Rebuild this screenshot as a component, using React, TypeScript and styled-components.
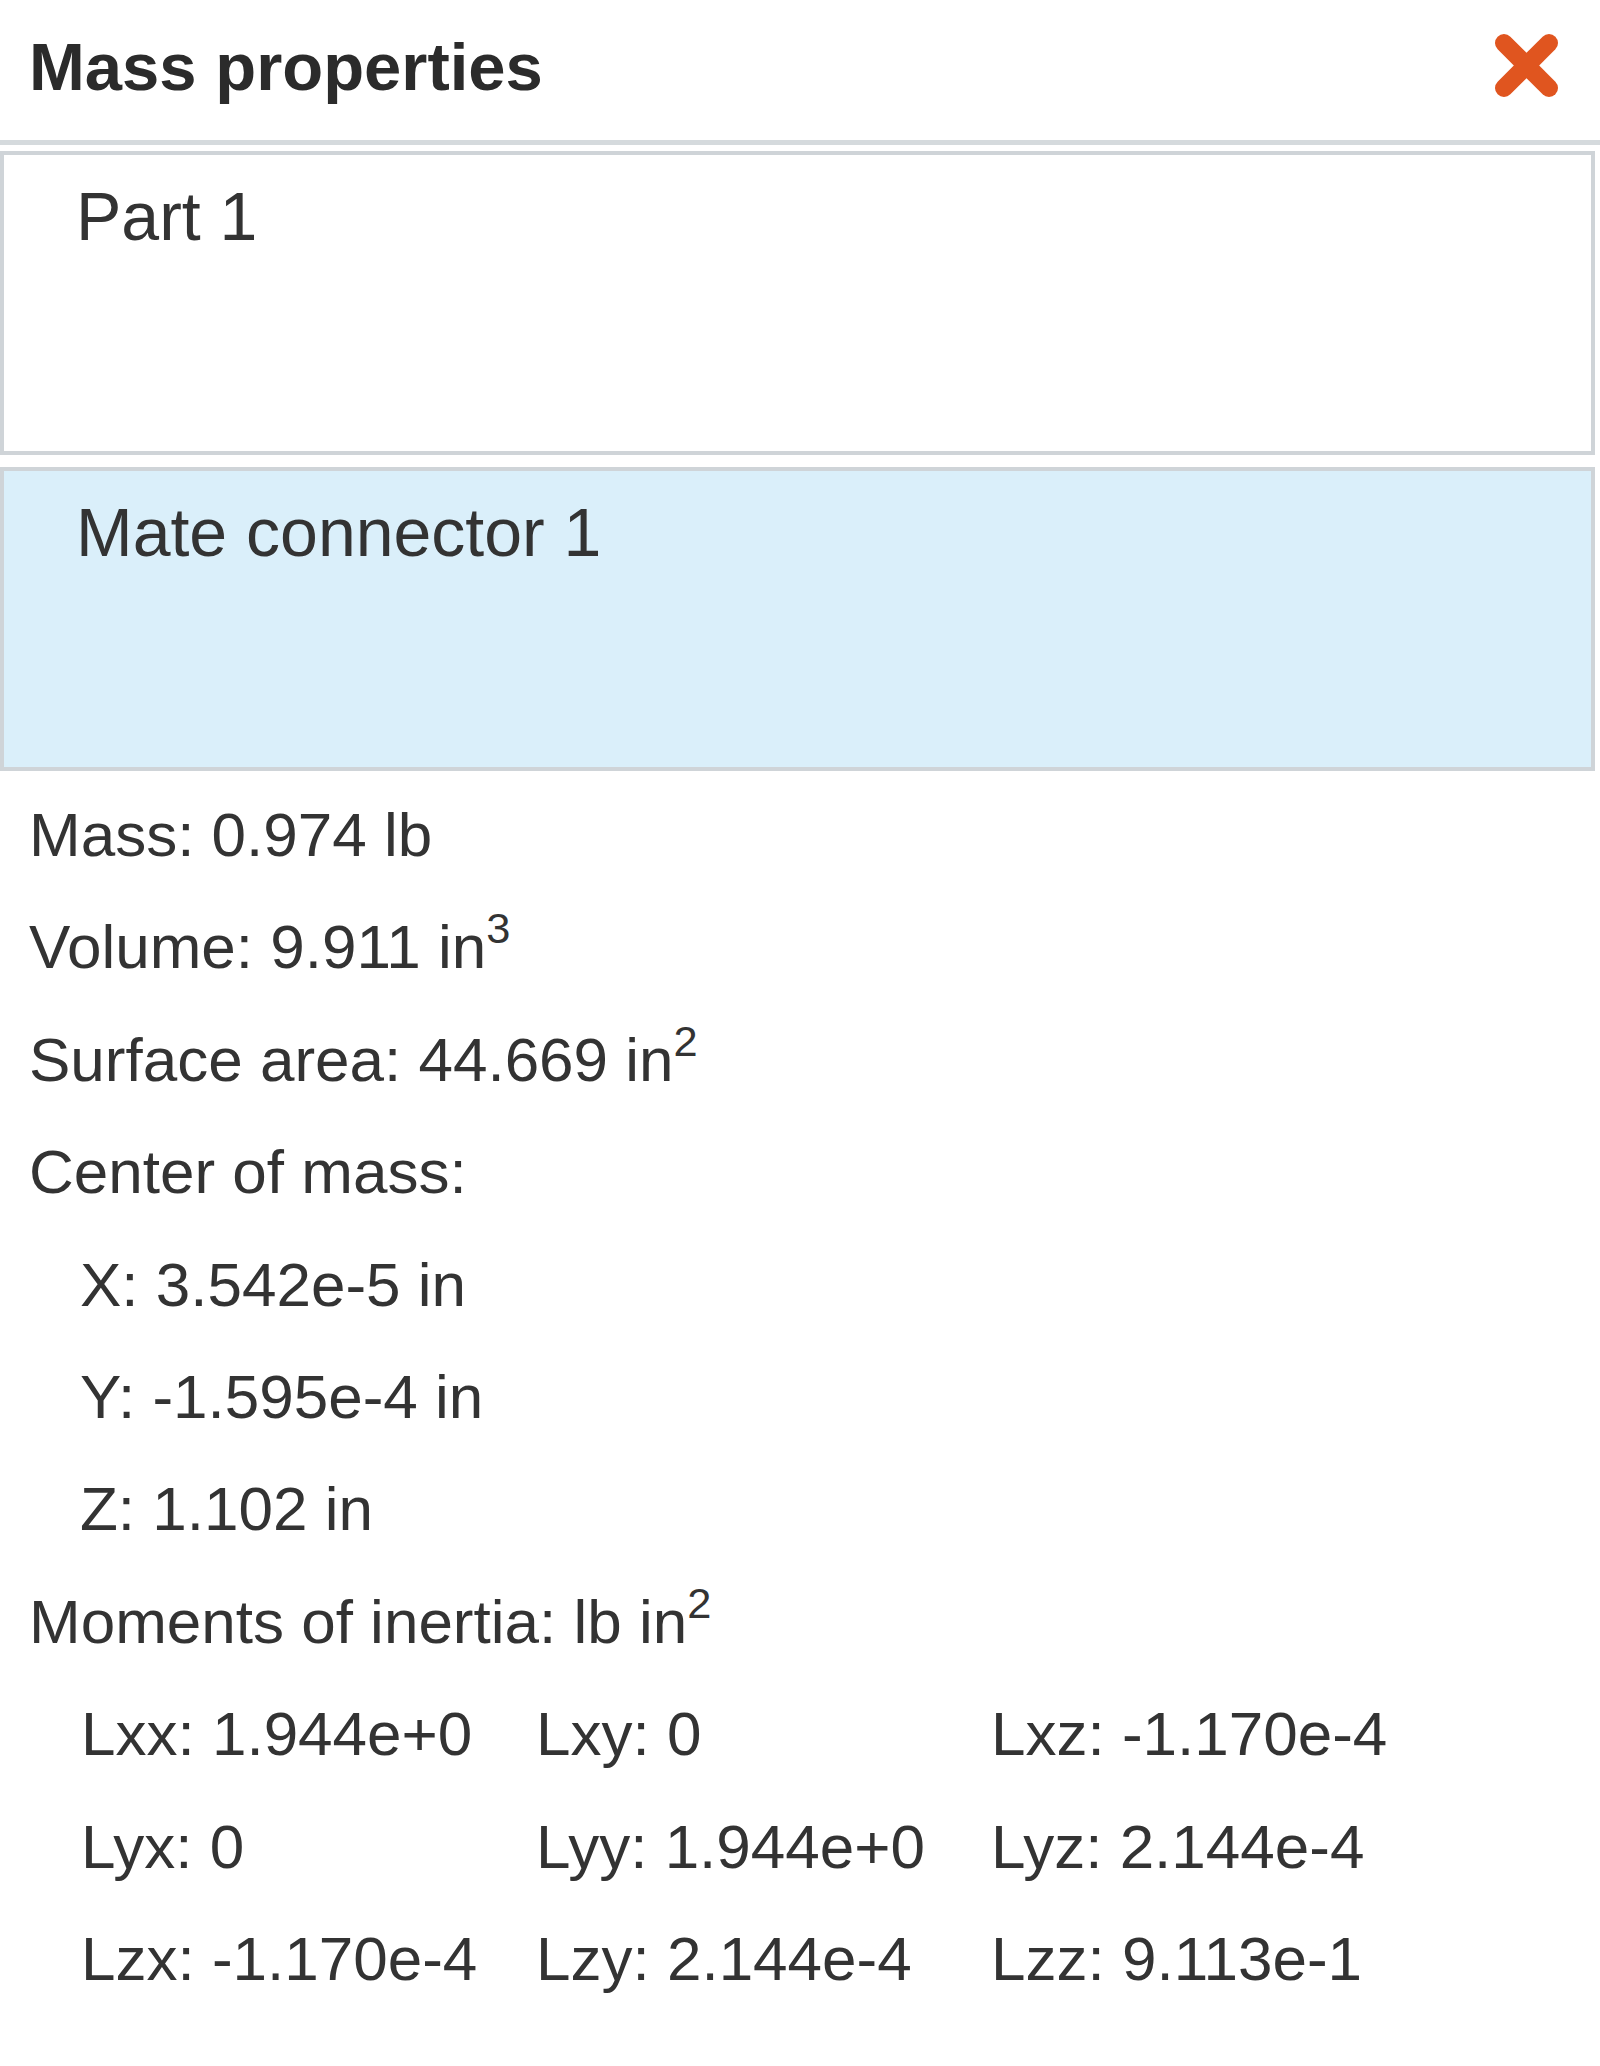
import React from 'react';
import styled, { createGlobalStyle } from 'styled-components';

const Global = createGlobalStyle`
  html, body { margin: 0; padding: 0; background: #ffffff; }
  body { font-family: "Liberation Sans", Arial, sans-serif; color: #333333; }
`;

const Panel = styled.div`
  width: 1600px;
  display: flex;
  flex-direction: column;
`;

const Header = styled.header`
  height: 140px;
  display: flex;
  justify-content: space-between;
  align-items: flex-start;
  padding: 0 40px 0 29px;
  border-bottom: 5px solid #d5dadd;
`;

const Title = styled.h1`
  margin: 33px 0 0;
  font-size: 67px;
  line-height: 67px;
  font-weight: 700;
  color: #2b2b2b;
`;

const CloseButton = styled.button`
  margin-top: 32px;
  width: 67px;
  height: 67px;
  padding: 0;
  border: 0;
  background: none;
  display: block;
  cursor: pointer;
`;

const ItemList = styled.div`
  display: flex;
  flex-direction: column;
  gap: 12px;
  margin-top: 6px;
  padding-right: 5px;
`;

const Item = styled.div<{ $selected?: boolean }>`
  height: 304px;
  box-sizing: border-box;
  border: 4px solid #cfd4d8;
  background: ${(p) => (p.$selected ? '#daeffa' : '#ffffff')};
  padding: 21px 0 0 72px;
  font-size: 68px;
  line-height: 1.2;
  color: #333333;
`;

const Props = styled.div`
  margin-top: 8px;
  display: flex;
  flex-direction: column;
`;

const Row = styled.div<{ $indent?: boolean }>`
  font-size: 62px;
  line-height: 112.4px;
  padding-left: ${(p) => (p.$indent ? '80px' : '29px')};
  white-space: nowrap;
  color: #333333;
`;

const Sup = styled.sup`
  font-size: 0.7em;
  line-height: 0;
  vertical-align: 25px;
`;

const InertiaGrid = styled.div`
  display: grid;
  grid-template-columns: repeat(3, 455px);
  padding-left: 81px;
`;

const Cell = styled.div`
  font-size: 62px;
  line-height: 112.4px;
  white-space: nowrap;
  color: #333333;
`;

const CloseIcon = () => (
  <svg width="67" height="67" viewBox="0 0 67 67">
    <g stroke="#e0551f" strokeWidth="18" strokeLinecap="round">
      <line x1="11" y1="11" x2="56" y2="56" />
      <line x1="56" y1="11" x2="11" y2="56" />
    </g>
  </svg>
);

const inertia = [
  'Lxx: 1.944e+0', 'Lxy: 0', 'Lxz: -1.170e-4',
  'Lyx: 0', 'Lyy: 1.944e+0', 'Lyz: 2.144e-4',
  'Lzx: -1.170e-4', 'Lzy: 2.144e-4', 'Lzz: 9.113e-1',
];

export default function App() {
  return (
    <>
      <Global />
      <Panel>
        <Header>
          <Title>Mass properties</Title>
          <CloseButton aria-label="Close">
            <CloseIcon />
          </CloseButton>
        </Header>
        <ItemList>
          <Item>Part 1</Item>
          <Item $selected>Mate connector 1</Item>
        </ItemList>
        <Props>
          <Row>Mass: 0.974 lb</Row>
          <Row>Volume: 9.911 in<Sup>3</Sup></Row>
          <Row>Surface area: 44.669 in<Sup>2</Sup></Row>
          <Row>Center of mass:</Row>
          <Row $indent>X: 3.542e-5 in</Row>
          <Row $indent>Y: -1.595e-4 in</Row>
          <Row $indent>Z: 1.102 in</Row>
          <Row>Moments of inertia: lb in<Sup>2</Sup></Row>
          <InertiaGrid>
            {inertia.map((t) => (
              <Cell key={t}>{t}</Cell>
            ))}
          </InertiaGrid>
        </Props>
      </Panel>
    </>
  );
}
